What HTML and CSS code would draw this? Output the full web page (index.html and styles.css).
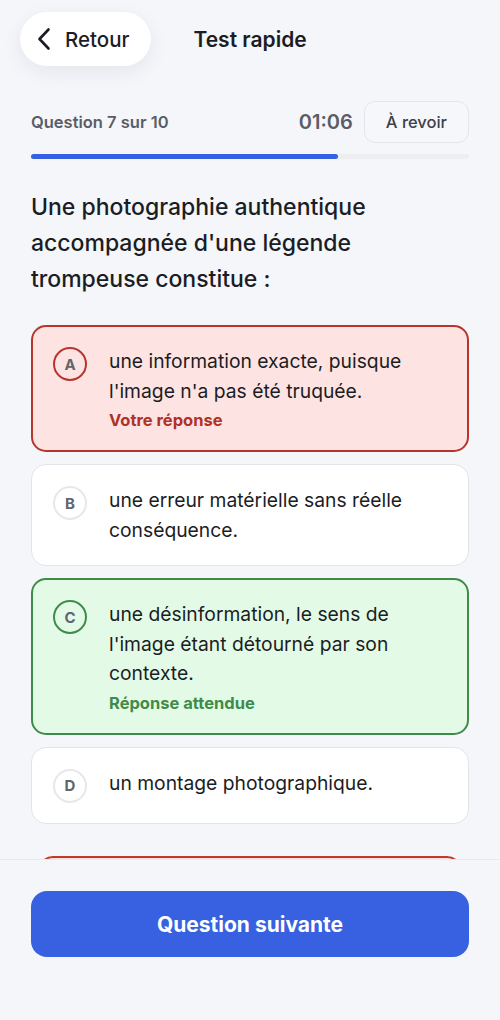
FILE: index.html
```html
<!DOCTYPE html>
<html lang="fr">

<head>
    <meta charset="UTF-8">
    <meta name="viewport" content="width=device-width, initial-scale=1.0">
    <title>Test rapide</title>
    <link rel="stylesheet" href="styles.css">
</head>

<body>
    <div class="app">
        <div class="scroll">
            <header class="header">
                <button class="back-btn">
                    <svg width="14" height="24" viewBox="0 0 14 24" fill="none">
                        <path d="M11.5 2.5L2.5 12L11.5 21.5" stroke="#1b1d24" stroke-width="2.6" stroke-linecap="round" stroke-linejoin="round" />
                    </svg>
                    <span>Retour</span>
                </button>
                <div class="title">Test rapide</div>
            </header>

            <div class="meta">
                <span class="counter">Question 7 sur 10</span>
                <div class="meta-right">
                    <span class="timer">01:06</span>
                    <button class="review-btn">À revoir</button>
                </div>
            </div>
            <div class="progress">
                <div class="progress-fill" style="width: 70%"></div>
            </div>

            <h1 class="question">Une photographie authentique accompagnée d'une légende trompeuse constitue :</h1>

            <div class="options">
                <div class="option wrong">
                    <span class="letter">A</span>
                    <div class="option-body">
                        <p>une information exacte, puisque l'image n'a pas été truquée.</p>
                        <span class="tag">Votre réponse</span>
                    </div>
                </div>
                <div class="option">
                    <span class="letter">B</span>
                    <div class="option-body">
                        <p>une erreur matérielle sans réelle conséquence.</p>
                    </div>
                </div>
                <div class="option right">
                    <span class="letter">C</span>
                    <div class="option-body">
                        <p>une désinformation, le sens de l'image étant détourné par son contexte.</p>
                        <span class="tag">Réponse attendue</span>
                    </div>
                </div>
                <div class="option">
                    <span class="letter">D</span>
                    <div class="option-body">
                        <p>un montage photographique.</p>
                    </div>
                </div>
            </div>

            <!-- carte suivante, masquée par le pied de page -->
            <div class="feedback"></div>
        </div>

        <footer class="footer">
            <button class="next-btn">Question suivante</button>
        </footer>
    </div>
</body>

</html>
```

FILE: styles.css
```css
/* base */
body {
    margin: 0;
    font-family: Inter, "Noto Sans", sans-serif;
    background-color: #f4f6fa;
    color: #1b1d24;
}

.app {
    height: 1020px;
    display: flex;
    flex-direction: column;
}

.scroll {
    flex: 1;
    overflow: hidden;
}

button {
    font-family: inherit;
    cursor: pointer;
}

/* header */
.header {
    display: flex;
    align-items: center;
    padding: 12px 20px 0;
}

.back-btn {
    display: flex;
    align-items: center;
    gap: 14px;
    height: 54px;
    padding: 0 22px 0 17px;
    border: none;
    border-radius: 27px;
    background-color: #fff;
    box-shadow: 0 6px 20px rgba(20, 30, 60, 0.07);
    font-size: 20.5px;
    font-weight: 500;
    color: #1b1d24;
}

.title {
    margin-left: 42px;
    font-size: 21px;
    font-weight: 600;
}

/* meta row */
.meta {
    display: flex;
    justify-content: space-between;
    align-items: center;
    margin-top: 35px;
    padding: 0 31px;
}

.counter {
    font-size: 16.5px;
    font-weight: 600;
    color: #5a5d66;
}

.meta-right {
    display: flex;
    align-items: center;
    gap: 11px;
}

.timer {
    font-size: 20px;
    font-weight: 600;
    color: #5a5d66;
}

.review-btn {
    height: 42px;
    padding: 0 21px;
    border: 1px solid #e4e6eb;
    border-radius: 11px;
    background-color: #f6f7fa;
    font-size: 16.5px;
    font-weight: 500;
    color: #3d4049;
}

.progress {
    margin: 11px 31px 0;
    height: 5px;
    border-radius: 3px;
    background-color: #eceef2;
}

.progress-fill {
    height: 100%;
    border-radius: 3px;
    background-color: #3761e0;
}

/* question */
.question {
    margin: 30px 31px 0;
    font-size: 23px;
    line-height: 36px;
    font-weight: 500;
}

.options {
    display: flex;
    flex-direction: column;
    gap: 12px;
    margin: 28px 31px 0;
}

.option {
    display: flex;
    align-items: flex-start;
    gap: 22px;
    padding: 21px 20px 20px 21px;
    border: 1px solid #e2e4e9;
    border-radius: 15px;
    background-color: #fff;
}

.letter {
    flex-shrink: 0;
    box-sizing: border-box;
    display: flex;
    align-items: center;
    justify-content: center;
    width: 34px;
    height: 34px;
    border: 2px solid #e6e8ec;
    border-radius: 50%;
    font-size: 15px;
    font-weight: 700;
    color: #62656e;
}

.option-body p {
    margin: 0;
    font-size: 19.3px;
    line-height: 29.5px;
    color: #1b1d24;
}

.tag {
    display: block;
    margin-top: 4px;
    font-size: 16.5px;
    line-height: 20px;
    font-weight: 700;
}

.option.wrong {
    padding: 20px 19px 20px 20px;
    border: 2px solid #b8352e;
    background-color: #fde4e2;
}

.option.wrong .letter {
    border-color: #b8352e;
}

.option.wrong .tag {
    color: #b0302a;
}

.option.right {
    padding: 20px 19px 20px 20px;
    border: 2px solid #3f8b4a;
    background-color: #e3fbe6;
}

.option.right .letter {
    border-color: #3f8b4a;
}

.option.right .tag {
    color: #3f8b4a;
}

/* next card, cut by footer */
.feedback {
    height: 80px;
    margin: 32px 38px 0;
    border: 2px solid #c0392b;
    border-radius: 15px;
    background-color: #fde4e2;
}

/* footer */
.footer {
    flex-shrink: 0;
    height: 161px;
    box-sizing: border-box;
    padding: 31px 31px 0;
    border-top: 1px solid #e8eaef;
    background-color: #f4f6fa;
}

.next-btn {
    width: 100%;
    height: 66px;
    border: none;
    border-radius: 16px;
    background-color: #3761e0;
    color: #fff;
    font-size: 21px;
    font-weight: 700;
}
```
